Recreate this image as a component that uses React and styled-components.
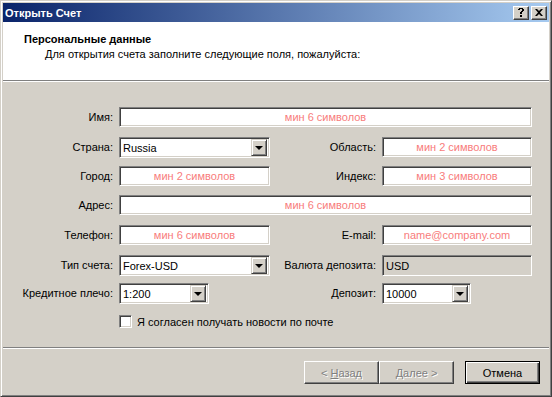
import styled, { createGlobalStyle } from "styled-components";

const GlobalStyle = createGlobalStyle`
  html, body {
    margin: 0;
    padding: 0;
    background: #d4d0c8;
  }
  body {
    font-family: "Liberation Sans", Arial, sans-serif;
    font-size: 11px;
    color: #000;
  }
`;

const Window = styled.div`
  width: 552px;
  height: 397px;
  box-sizing: border-box;
  border: 1px solid;
  border-color: #d4d0c8 #404040 #404040 #d4d0c8;
  box-shadow: inset 1px 1px #fff, inset -1px -1px #808080;
  padding: 2px;
  background: #d4d0c8;
  display: flex;
  flex-direction: column;
`;

const TitleBar = styled.div`
  height: 19px;
  flex-shrink: 0;
  display: flex;
  align-items: center;
  padding: 0 2px 0 2px;
  background: linear-gradient(to right, #0a246a, #a6caf0);
  color: #fff;
  font-weight: 700;
`;

const TitleText = styled.span`
  flex: 1;
`;

const CaptionButton = styled.div`
  width: 16px;
  height: 14px;
  box-sizing: border-box;
  margin-left: ${(p) => (p.$gap ? "2px" : "0")};
  background: #d4d0c8;
  border: 1px solid;
  border-color: #fff #404040 #404040 #fff;
  box-shadow: inset -1px -1px #808080;
  display: flex;
  align-items: center;
  justify-content: center;
  color: #000;
`;

const Header = styled.div`
  height: 58px;
  flex-shrink: 0;
  box-sizing: border-box;
  background: #fff;
  padding: 11px 0 0 21px;
`;

const HeaderTitle = styled.div`
  font-weight: 700;
  line-height: 13px;
`;

const HeaderSub = styled.div`
  line-height: 13px;
  margin: 2px 0 0 21px;
`;

const Separator = styled.div`
  height: 0;
  flex-shrink: 0;
  border-top: 1px solid #808080;
  border-bottom: 1px solid #fff;
`;

const Form = styled.div`
  flex: 1;
  padding-top: 25px;
  display: grid;
  grid-template-columns: 110px 151px 100px 150px;
  grid-template-rows: 30px 29px 29px 30px 30px 28px 32px auto;
  column-gap: 6px;
  align-items: start;
`;

const Label = styled.div`
  height: ${(p) => p.$h || 20}px;
  line-height: ${(p) => p.$h || 20}px;
  text-align: right;
  white-space: nowrap;
`;

const sunken = `
  box-sizing: border-box;
  border: 1px solid;
  border-color: #808080 #fff #fff #808080;
  box-shadow: inset 1px 1px #404040, inset -1px -1px #d4d0c8;
`;

const TextInput = styled.input`
  ${sunken}
  display: block;
  width: 100%;
  height: ${(p) => p.$h || 20}px;
  margin: 0;
  padding: 0 3px;
  font: inherit;
  color: #000;
  text-align: ${(p) => (p.$left ? "left" : "center")};
  background: ${(p) => (p.$readonly ? "#d4d0c8" : "#fff")};
  outline: none;
  grid-column: ${(p) => (p.$wide ? "2 / 5" : "auto")};
  &::placeholder {
    color: #f87c7c;
    opacity: 1;
  }
`;

const Combo = styled.div`
  ${sunken}
  width: ${(p) => (p.$w ? `${p.$w}px` : "100%")};
  height: 21px;
  padding: 2px;
  display: flex;
  align-items: center;
  background: #fff;
`;

const ComboText = styled.span`
  flex: 1;
  padding-left: 1px;
`;

const DropButton = styled.div`
  width: 16px;
  height: 17px;
  box-sizing: border-box;
  background: #d4d0c8;
  border: 1px solid;
  border-color: #d4d0c8 #404040 #404040 #d4d0c8;
  box-shadow: inset 1px 1px #fff, inset -1px -1px #808080;
  display: flex;
  align-items: center;
  justify-content: center;
  &::after {
    content: "";
    width: 0;
    height: 0;
    border-left: 4px solid transparent;
    border-right: 4px solid transparent;
    border-top: 4px solid #000;
    margin-top: 1px;
  }
`;

const CheckRow = styled.label`
  grid-column: 2 / 5;
  display: flex;
  align-items: center;
  gap: 5px;
  height: 13px;
`;

const CheckBox = styled.span`
  ${sunken}
  width: 13px;
  height: 13px;
  background: #fff;
`;

const Footer = styled.div`
  height: 45px;
  flex-shrink: 0;
  box-sizing: border-box;
  display: flex;
  justify-content: flex-end;
  align-items: flex-start;
  padding: 12px 9px 0 0;
`;

const ButtonGroup = styled.div`
  display: flex;
  margin-right: 11px;
`;

const Button = styled.div`
  width: 75px;
  height: 23px;
  box-sizing: border-box;
  display: flex;
  align-items: center;
  justify-content: center;
  background: #d4d0c8;
  border: 1px solid;
  border-color: ${(p) => (p.$default ? "#000" : "#fff #404040 #404040 #fff")};
  box-shadow: ${(p) =>
    p.$default
      ? "inset 1px 1px #fff, inset -1px -1px #404040, inset -2px -2px #808080"
      : "inset -1px -1px #808080"};
  color: ${(p) => (p.$disabled ? "#808080" : "#000")};
  text-shadow: ${(p) => (p.$disabled ? "1px 1px #fff" : "none")};
  & u {
    text-decoration: underline;
  }
`;

function Field({ label, placeholder, wide }) {
  return (
    <>
      <Label>{label}</Label>
      <TextInput $wide={wide} placeholder={placeholder} defaultValue="" />
    </>
  );
}

function Select({ label, value, width }) {
  return (
    <>
      <Label $h={21}>{label}</Label>
      <Combo $w={width}>
        <ComboText>{value}</ComboText>
        <DropButton />
      </Combo>
    </>
  );
}

export default function App() {
  return (
    <>
      <GlobalStyle />
      <Window>
        <TitleBar>
          <TitleText>Открыть Счет</TitleText>
          <CaptionButton>
            <svg width="6" height="9" viewBox="0 0 6 9">
              <path d="M1 0h4v1H1z M0 1h2v1H0z M4 1h2v2H4z M3 3h2v1H3z M2 4h2v2H2z M2 7h2v2H2z" fill="#000" />
            </svg>
          </CaptionButton>
          <CaptionButton $gap>
            <svg width="8" height="7" viewBox="0 0 8 7">
              <path d="M0 0h2l2 2 2-2h2L5 3.5 8 7H6L4 5 2 7H0l3-3.5z" fill="#000" />
            </svg>
          </CaptionButton>
        </TitleBar>

        <Header>
          <HeaderTitle>Персональные данные</HeaderTitle>
          <HeaderSub>Для открытия счета заполните следующие поля, пожалуйста:</HeaderSub>
        </Header>
        <Separator />

        <Form>
          <Field label="Имя:" placeholder="мин 6 символов" wide />

          <Select label="Страна:" value="Russia" />
          <Label $h={21}>Область:</Label>
          <TextInput placeholder="мин 2 символов" defaultValue="" />

          <Field label="Город:" placeholder="мин 2 символов" />
          <Field label="Индекс:" placeholder="мин 3 символов" />

          <Field label="Адрес:" placeholder="мин 6 символов" wide />

          <Field label="Телефон:" placeholder="мин 6 символов" />
          <Field label="E-mail:" placeholder="name@company.com" />

          <Select label="Тип счета:" value="Forex-USD" />
          <Label $h={21}>Валюта депозита:</Label>
          <TextInput $readonly $left $h={21} readOnly defaultValue="USD" />

          <Select label="Кредитное плечо:" value="1:200" width={90} />
          <Select label="Депозит:" value="10000" width={89} />

          <CheckRow>
            <CheckBox />
            Я согласен получать новости по почте
          </CheckRow>
        </Form>

        <Separator />
        <Footer>
          <ButtonGroup>
            <Button $disabled>
              &lt;&nbsp;<u>Н</u>азад
            </Button>
            <Button $disabled>
              <u>Д</u>алее&nbsp;&gt;
            </Button>
          </ButtonGroup>
          <Button $default>Отмена</Button>
        </Footer>
      </Window>
    </>
  );
}
